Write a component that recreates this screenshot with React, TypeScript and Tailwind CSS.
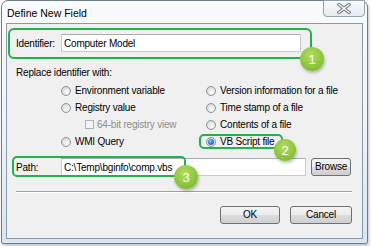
import React from 'react';

const font = "font-['Liberation_Sans',Arial,sans-serif]";

const Radio = ({ checked = false }: { checked?: boolean }) => (
  <span className="w-[10px] h-[10px] rounded-full border border-[#8f9497] bg-[radial-gradient(circle_at_60%_65%,#ffffff_0%,#e6e6e6_45%,#c9cbcd_100%)] flex items-center justify-center shrink-0">
    {checked && (
      <span className="w-[6px] h-[6px] rounded-full bg-[radial-gradient(circle_at_40%_35%,#7fd0ff_0%,#2a86d8_45%,#0b3f8a_100%)]" />
    )}
  </span>
);

const Option = ({ label, checked }: { label: string; checked?: boolean }) => (
  <div className="h-[17px] flex items-center gap-[4px]">
    <Radio checked={checked} />
    <span className="leading-[12px]">{label}</span>
  </div>
);

const Btn = ({ children, w }: { children: React.ReactNode; w: string }) => (
  <button
    type="button"
    className={`${w} h-[18px] rounded-[3px] border border-[#707070] bg-[linear-gradient(#f4f4f4_0%,#ebebeb_50%,#dddddd_51%,#cfcfcf_100%)] text-black leading-[12px] flex items-center justify-center`}
  >
    {children}
  </button>
);

const Badge = ({ n, className }: { n: number; className: string }) => (
  <div
    className={`absolute rounded-full bg-[radial-gradient(circle_at_45%_35%,#b4dc63_0%,#8fc63d_55%,#74ad2c_100%)] shadow-[1px_2px_3px_rgba(0,0,0,0.25)] flex items-center justify-center text-white text-[13px] leading-none tracking-normal ${font} ${className}`}
  >
    {n}
  </div>
);

export default function App() {
  return (
    <div className={`relative w-[372px] h-[246px] bg-white pl-[1px] text-[10px] tracking-[-0.2px] text-black ${font}`}>
      <div className="w-[367px] h-[244px] border border-[#6f7d8b] rounded-t-[7px] rounded-b-[2px] bg-[linear-gradient(#f8fafc_0%,#f1f5f9_45%,#d9e5f1_100%)] shadow-[1px_2px_3px_rgba(60,80,110,0.35)] flex flex-col">
        {/* title bar */}
        <div className="h-[22px] flex justify-between">
          <div className="pl-[5px] pt-[6px] text-[10.5px] leading-[12px] tracking-normal text-black">Define New Field</div>
          <div className="mr-[2px] -mt-[1px] w-[42px] h-[17px] rounded-b-[4px] border border-[#94a1ae] bg-[linear-gradient(#f9fbfc,#e6ebf0)] flex items-center justify-center">
            <svg width="14" height="11" viewBox="0 0 14 11">
              <path d="M2 1.5 L12 9.5 M12 1.5 L2 9.5" stroke="#6a737c" strokeWidth="3.4" strokeLinecap="square" />
              <path d="M2 1.5 L12 9.5 M12 1.5 L2 9.5" stroke="#f7f7f7" strokeWidth="1.6" strokeLinecap="square" />
            </svg>
          </div>
        </div>

        {/* client area */}
        <div className="mx-[4px] h-[216px] border border-[#8a98a7] bg-[#f0f0f0] pl-[9px] pr-[10px] flex flex-col">
          <div className="mt-[10px] h-[18px] flex items-center">
            <span className="w-[45px]">Identifier:</span>
            <div className="w-[240px] h-[18px] bg-white border border-[#c8ccd2] border-t-[#abadb3] pl-[2px] flex items-center">
              Computer Model
            </div>
          </div>

          <div className="mt-[15px] leading-[12px]">Replace identifier with:</div>

          <div className="mt-[3px] ml-[45px] grid grid-cols-[145px_1fr]">
            <div className="flex flex-col">
              <Option label="Environment variable" />
              <Option label="Registry value" />
              <div className="h-[17px] flex items-center gap-[3px] pl-[24px] text-[#8d8d8d]">
                <span className="w-[9px] h-[9px] border border-[#b1b1b1] bg-[#f4f4f4]" />
                <span className="leading-[12px]">64-bit registry view</span>
              </div>
              <Option label="WMI Query" />
            </div>
            <div className="flex flex-col">
              <Option label="Version information for a file" />
              <Option label="Time stamp of a file" />
              <Option label="Contents of a file" />
              <Option label="VB Script file" checked />
            </div>
          </div>

          <div className="mt-[8px] h-[18px] flex items-center">
            <span className="w-[45px]">Path:</span>
            <div className="w-[245px] h-[18px] bg-white border border-[#c8ccd2] border-t-[#abadb3] pl-[2px] flex items-center">
              C:\Temp\bginfo\comp.vbs
            </div>
            <div className="ml-[5px]">
              <Btn w="w-[40px]">Browse</Btn>
            </div>
          </div>

          <div className="mt-[15px] border-t border-[#a0a0a0] border-b border-b-white" />

          <div className="mt-[13px] flex justify-end gap-[10px]">
            <Btn w="w-[60px]">OK</Btn>
            <Btn w="w-[62px]">Cancel</Btn>
          </div>
        </div>
      </div>

      {/* annotations */}
      <div className="absolute left-[8px] top-[28px] w-[304px] h-[31px] border-2 border-[#22b14c] rounded-[6px]" />
      <div className="absolute left-[199px] top-[134px] w-[84px] h-[15px] border-2 border-[#22b14c] rounded-[5px]" />
      <div className="absolute left-[12px] top-[156px] w-[174px] h-[21px] border-2 border-[#22b14c] rounded-[5px]" />
      <Badge n={1} className="left-[300px] top-[47px] w-[24px] h-[24px]" />
      <Badge n={2} className="left-[274px] top-[139px] w-[22px] h-[22px]" />
      <Badge n={3} className="left-[174px] top-[165px] w-[24px] h-[24px]" />
    </div>
  );
}
